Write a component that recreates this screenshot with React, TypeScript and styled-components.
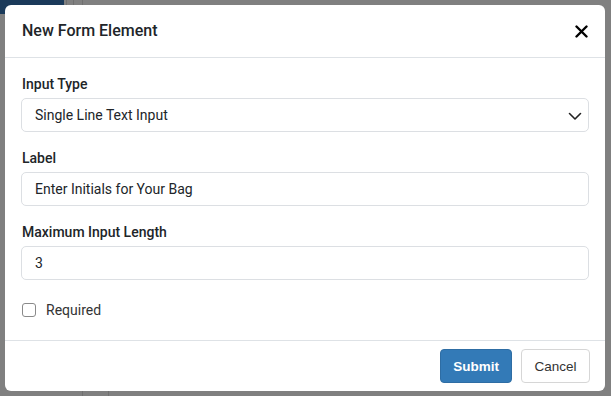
import styled, { createGlobalStyle } from "styled-components";

const GlobalStyle = createGlobalStyle`
  html, body {
    margin: 0;
    padding: 0;
  }
  body {
    font-family: Roboto, "Liberation Sans", sans-serif;
    color: #212529;
  }
`;

const Backdrop = styled.div`
  position: relative;
  width: 611px;
  height: 396px;
  box-sizing: border-box;
  padding: 5px 6px 5px 5px;
  background: #808080;
  overflow: hidden;
`;

// bit of the page's navbar peeking out behind the overlay
const NavPeek = styled.div`
  position: absolute;
  left: 0;
  top: 0;
  width: 64px;
  height: 14px;
  background: #1b3a5a;
`;

const Seam = styled.div<{ $x: number; $bottom?: boolean }>`
  position: absolute;
  left: ${(p) => p.$x}px;
  ${(p) => (p.$bottom ? "bottom: 0;" : "top: 0;")}
  width: 1px;
  height: 6px;
  background: #707070;
`;

const Modal = styled.div`
  position: relative;
  height: 386px;
  background: #fff;
  border-radius: 6px;
  display: flex;
  flex-direction: column;
`;

const Header = styled.div`
  display: flex;
  align-items: center;
  justify-content: space-between;
  padding: 16px 16px 16px 17px;
  border-bottom: 1px solid #dee2e6;
`;

const Title = styled.h5`
  margin: 0;
  font-size: 16px;
  line-height: 20px;
  font-weight: 500;
  color: #212529;
`;

const CloseButton = styled.button`
  border: 0;
  background: none;
  padding: 0;
  width: 16px;
  height: 16px;
  display: flex;
  align-items: center;
  justify-content: center;
  cursor: pointer;
`;

const Body = styled.div`
  flex: 1;
  padding: 16px 16px 0 16px;
`;

const Group = styled.div`
  margin-bottom: 16px;
`;

const Label = styled.label`
  display: block;
  padding-left: 1px;
  font-size: 14px;
  line-height: 20px;
  font-weight: 500;
  margin-bottom: 4px;
`;

const Field = styled.div`
  position: relative;
  height: 34px;
  box-sizing: border-box;
  border: 1px solid #dcdfe3;
  border-radius: 5px;
  display: flex;
  align-items: center;
  padding: 0 13px;
  font-size: 14px;
  color: #212529;
`;

const Chevron = styled.svg`
  position: absolute;
  right: 6px;
  top: 10px;
`;

const CheckRow = styled.label`
  display: flex;
  align-items: center;
  gap: 10px;
  margin-top: 20px;
  padding-left: 1px;
  font-size: 14px;
  line-height: 20px;
  color: #333;
`;

const Box = styled.span`
  width: 12px;
  height: 12px;
  border: 1px solid #8a8a8a;
  border-radius: 3px;
`;

const Footer = styled.div`
  display: flex;
  justify-content: flex-end;
  gap: 9px;
  padding: 8px 15px 8px 16px;
  border-top: 1px solid #dee2e6;
`;

const Btn = styled.button<{ $primary?: boolean }>`
  height: 34px;
  min-width: 69px;
  box-sizing: border-box;
  padding: 0 12px;
  border-radius: 4px;
  font-family: "Liberation Sans", Arial, sans-serif;
  font-size: 13.5px;
  font-weight: ${(p) => (p.$primary ? 700 : 400)};
  color: ${(p) => (p.$primary ? "#fff" : "#333")};
  background: ${(p) => (p.$primary ? "#337ab7" : "#fff")};
  border: 1px solid ${(p) => (p.$primary ? "#2e6da4" : "#d6d6d6")};
`;

export default function App() {
  return (
    <>
      <GlobalStyle />
      <Backdrop>
        <NavPeek />
        <Seam $x={66} />
        <Seam $x={73} />
        <Seam $x={82} />
        <Seam $x={82} $bottom />
        <Seam $x={108} $bottom />
        <Modal>
          <Header>
            <Title>New Form Element</Title>
            <CloseButton aria-label="Close">
              <svg width="13" height="13" viewBox="0 0 13 13">
                <path d="M1.5 1.5 L11.5 11.5 M11.5 1.5 L1.5 11.5" stroke="#000" strokeWidth="2.4" strokeLinecap="round" />
              </svg>
            </CloseButton>
          </Header>
          <Body>
            <Group>
              <Label>Input Type</Label>
              <Field>
                Single Line Text Input
                <Chevron width="14" height="14" viewBox="0 0 14 14">
                  <path d="M1.5 4.5 L7 10 L12.5 4.5" stroke="#222" strokeWidth="1.6" fill="none" strokeLinecap="round" strokeLinejoin="round" />
                </Chevron>
              </Field>
            </Group>
            <Group>
              <Label>Label</Label>
              <Field>Enter Initials for Your Bag</Field>
            </Group>
            <Group>
              <Label>Maximum Input Length</Label>
              <Field>3</Field>
            </Group>
            <CheckRow>
              <Box />
              Required
            </CheckRow>
          </Body>
          <Footer>
            <Btn $primary>Submit</Btn>
            <Btn>Cancel</Btn>
          </Footer>
        </Modal>
      </Backdrop>
    </>
  );
}
